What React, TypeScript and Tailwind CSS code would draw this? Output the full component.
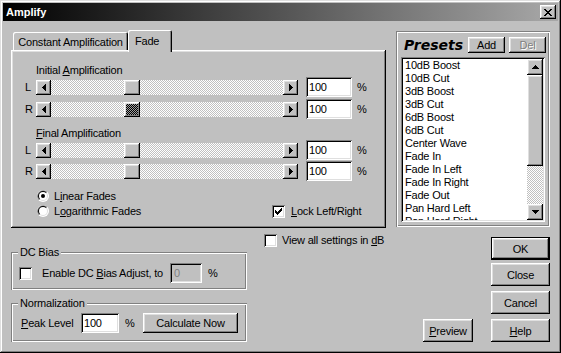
import React from "react";

const RAISED =
  "bg-[#c0c0c0] shadow-[inset_-1px_-1px_#000,inset_1px_1px_#fff,inset_-2px_-2px_#808080,inset_2px_2px_#dfdfdf]";
const SUNKEN =
  "shadow-[inset_1px_1px_#808080,inset_-1px_-1px_#fff,inset_2px_2px_#000,inset_-2px_-2px_#dfdfdf]";
const ETCHED =
  "shadow-[inset_1px_1px_#808080,inset_-1px_-1px_#fff,inset_2px_2px_#fff,inset_-2px_-2px_#808080]";
const DITHER =
  "bg-[image:repeating-conic-gradient(#c0c0c0_0_25%,#fff_0_50%)] bg-[length:2px_2px]";

function Arrow({ dir }: { dir: "left" | "right" | "up" | "down" }) {
  if (dir === "left")
    return (
      <svg width="4" height="7" viewBox="0 0 4 7" shapeRendering="crispEdges">
        <path d="M3 0h1v7h-1zM2 1h1v5h-1zM1 2h1v3h-1zM0 3h1v1h-1z" fill="#000" />
      </svg>
    );
  if (dir === "right")
    return (
      <svg width="4" height="7" viewBox="0 0 4 7" shapeRendering="crispEdges">
        <path d="M0 0h1v7h-1zM1 1h1v5h-1zM2 2h1v3h-1zM3 3h1v1h-1z" fill="#000" />
      </svg>
    );
  if (dir === "up")
    return (
      <svg width="7" height="4" viewBox="0 0 7 4" shapeRendering="crispEdges">
        <path d="M3 0h1v1h-1zM2 1h3v1h-3zM1 2h5v1h-5zM0 3h7v1h-7z" fill="#000" />
      </svg>
    );
  return (
    <svg width="7" height="4" viewBox="0 0 7 4" shapeRendering="crispEdges">
      <path d="M0 0h7v1h-7zM1 1h5v1h-5zM2 2h3v1h-3zM3 3h1v1h-1z" fill="#000" />
    </svg>
  );
}

function ArrowBtn({ dir }: { dir: "left" | "right" }) {
  return (
    <div className={`${RAISED} w-[15px] h-[15px] flex items-center justify-center shrink-0`}>
      <Arrow dir={dir} />
    </div>
  );
}

function Slider({ dark }: { dark?: boolean }) {
  return (
    <div className="flex h-[15px] w-[262px]">
      <ArrowBtn dir="left" />
      <div className={`flex-1 flex ${DITHER}`}>
        <div className="w-[73px] shrink-0" />
        {dark ? (
          <div className="w-[16px] h-[15px] bg-[image:repeating-conic-gradient(#000_0_25%,#a0a0a0_0_50%)] bg-[length:2px_2px] shadow-[inset_-1px_-1px_#000,inset_1px_1px_#fff,inset_-2px_-2px_#808080,inset_2px_2px_#dfdfdf]" />
        ) : (
          <div className={`${RAISED} w-[16px] h-[15px]`} />
        )}
      </div>
      <ArrowBtn dir="right" />
    </div>
  );
}

function SliderRow({ ch, dark, className }: { ch: string; dark?: boolean; className?: string }) {
  return (
    <div className={`flex items-center h-[20px] ${className ?? ""}`}>
      <span className="w-[11px]">{ch}</span>
      <Slider dark={dark} />
      <div className={`ml-[8px] w-[46px] h-[20px] bg-white ${SUNKEN} pl-[3px] flex items-center`}>100</div>
      <span className="ml-[5px]">%</span>
    </div>
  );
}

function Check({ checked }: { checked?: boolean }) {
  return (
    <div className={`w-[13px] h-[13px] bg-white ${SUNKEN} flex items-center justify-center shrink-0`}>
      {checked && (
        <svg width="7" height="7" viewBox="0 0 7 7" shapeRendering="crispEdges">
          <path
            d="M6 0h1v3h-1zM5 1h1v3h-1zM4 2h1v3h-1zM3 3h1v3h-1zM2 4h1v3h-1zM1 3h1v3h-1zM0 2h1v3h-1z"
            fill="#000"
          />
        </svg>
      )}
    </div>
  );
}

function Radio({ checked }: { checked?: boolean }) {
  return (
    <svg width="12" height="12" viewBox="0 0 12 12" className="shrink-0">
      <circle cx="6" cy="6" r="6" fill="#fff" />
      <path d="M1.76 10.24 A6 6 0 0 1 10.24 1.76 Z" fill="#808080" />
      <circle cx="6" cy="6" r="5" fill="#dfdfdf" />
      <path d="M2.46 9.54 A5 5 0 0 1 9.54 2.46 Z" fill="#000" />
      <circle cx="6" cy="6" r="4" fill="#fff" />
      {checked && <circle cx="6" cy="6" r="2" fill="#000" />}
    </svg>
  );
}

function Btn({
  children,
  className,
  def,
}: {
  children: React.ReactNode;
  className?: string;
  def?: boolean;
}) {
  return (
    <div
      className={`${RAISED} ${def ? "border border-black" : ""} flex items-center justify-center ${className ?? ""}`}
    >
      {children}
    </div>
  );
}

function Group({
  label,
  className,
  children,
}: {
  label: string;
  className?: string;
  children: React.ReactNode;
}) {
  return (
    <div className={`relative ${ETCHED} ${className ?? ""}`}>
      <span className="absolute left-[7px] top-[-7px] px-[2px] bg-[#c0c0c0] leading-[14px]">{label}</span>
      {children}
    </div>
  );
}

const presets = [
  "10dB Boost",
  "10dB Cut",
  "3dB Boost",
  "3dB Cut",
  "6dB Boost",
  "6dB Cut",
  "Center Wave",
  "Fade In",
  "Fade In Left",
  "Fade In Right",
  "Fade Out",
  "Pan Hard Left",
  "Pan Hard Right",
];

export default function App() {
  return (
    <div className="w-[561px] h-[353px] overflow-hidden bg-[#c0c0c0] p-[3px] shadow-[inset_-1px_-1px_#000,inset_1px_1px_#dfdfdf,inset_-2px_-2px_#808080,inset_2px_2px_#fff] font-['Liberation_Sans',Arial,sans-serif] text-[11px] leading-[14px] text-black tracking-[-0.2px]">
      {/* Title bar */}
      <div className="h-[18px] flex items-center justify-between pl-[3px] pr-[2px] bg-[linear-gradient(to_right,#000,#a8a8a8)]">
        <span className="text-white font-bold tracking-normal">Amplify</span>
        <div className={`${RAISED} w-[16px] h-[14px] flex items-center justify-center`}>
          <svg width="8" height="7" viewBox="0 0 8 7" shapeRendering="crispEdges">
            <path
              d="M0 0h2v1h-2zM6 0h2v1h-2zM1 1h2v1h-2zM5 1h2v1h-2zM2 2h4v1h-4zM3 3h2v1h-2zM2 4h4v1h-4zM1 5h2v1h-2zM5 5h2v1h-2zM0 6h2v1h-2zM6 6h2v1h-2z"
              fill="#000"
            />
          </svg>
        </div>
      </div>

      <div className="px-[8px]">
        {/* Top row */}
        <div className="flex gap-[10px] mt-[9px]">
          {/* Tab area */}
          <div className="w-[375px] flex flex-col">
            <div className="h-[20px] flex items-end pl-[2px]">
              <div className="w-[115px] h-[18px] pt-[3px] flex justify-center rounded-t-[2px] shadow-[inset_1px_1px_#fff,inset_-1px_0_#000,inset_-2px_0_#808080]">
                Constant Amplification
              </div>
              <div className="relative z-10 w-[44px] h-[22px] -mb-[2px] pt-[4px] pl-[7px] bg-[#c0c0c0] rounded-t-[2px] shadow-[inset_1px_1px_#fff,inset_-1px_0_#000,inset_-2px_0_#808080]">
                Fade
              </div>
            </div>
            <div className={`${RAISED} h-[178px] pl-[14px] pt-[13px] flex flex-col`}>
              <div className="pl-[11px] h-[14px]">
                Initial <u>A</u>mplification
              </div>
              <SliderRow ch="L" />
              <SliderRow ch="R" dark className="mt-[2px]" />
              <div className="pl-[11px] h-[14px] mt-[7px]">
                <u>F</u>inal Amplification
              </div>
              <SliderRow ch="L" />
              <SliderRow ch="R" className="mt-[1px]" />
              <div className="flex items-end mt-[8px]">
                <div className="ml-[12px] w-[235px] flex flex-col gap-[1px]">
                  <div className="flex items-center h-[14px] gap-[5px]">
                    <Radio checked />
                    <span>
                      L<u>i</u>near Fades
                    </span>
                  </div>
                  <div className="flex items-center h-[14px] gap-[5px]">
                    <Radio />
                    <span>
                      L<u>o</u>garithmic Fades
                    </span>
                  </div>
                </div>
                <div className="flex items-center h-[14px] gap-[6px]">
                  <Check checked />
                  <span>
                    <u>L</u>ock Left/Right
                  </span>
                </div>
              </div>
            </div>
          </div>

          {/* Presets */}
          <div className={`${ETCHED} w-[154px] h-[196px] mt-[1px] flex flex-col px-[5px] pt-[6px]`}>
            <div className="h-[16px] flex items-center">
              <span className="flex-1 pl-[3px] font-['DejaVu_Sans',sans-serif] font-bold italic text-[14px] tracking-normal">
                Presets
              </span>
              <Btn className="w-[37px] h-[16px]">Add</Btn>
              <Btn className="w-[37px] h-[16px] ml-[4px] -mr-[1px] text-[#808080] [text-shadow:1px_1px_#fff]">Del</Btn>
            </div>
            <div className={`mt-[4px] h-[165px] w-[144px] bg-white ${SUNKEN} flex p-[2px]`}>
              <div className="flex-1 overflow-hidden pl-[2px] leading-[13px]">
                {presets.map((p) => (
                  <div key={p} className="h-[13px]">
                    {p}
                  </div>
                ))}
              </div>
              <div className="w-[16px] flex flex-col">
                <div className={`${RAISED} h-[16px] flex items-center justify-center`}>
                  <Arrow dir="up" />
                </div>
                <div className={`${RAISED} h-[91px]`} />
                <div className={`flex-1 ${DITHER}`} />
                <div className={`${RAISED} h-[16px] flex items-center justify-center`}>
                  <Arrow dir="down" />
                </div>
              </div>
            </div>
          </div>
        </div>

        {/* Bottom row */}
        <div className="flex h-[114px]">
          <div className="w-[236px] flex flex-col">
            <Group label="DC Bias" className="mt-[24px] h-[38px]">
              <div className="flex items-center h-[20px] mt-[11px] pl-[8px]">
                <Check />
                <span className="ml-[10px] w-[128px]">
                  Enable DC <u>B</u>ias Adjust, to
                </span>
                <div className={`w-[32px] h-[20px] ${SUNKEN} flex items-center pl-[4px] text-[#808080]`}>0</div>
                <span className="ml-[6px]">%</span>
              </div>
            </Group>
            <Group label="Normalization" className="mt-[13px] h-[39px]">
              <div className="flex items-center h-[20px] mt-[10px] pl-[10px]">
                <span className="w-[60px]">
                  <u>P</u>eak Level
                </span>
                <div className={`w-[38px] h-[20px] bg-white ${SUNKEN} flex items-center pl-[3px]`}>100</div>
                <span className="ml-[6px] w-[18px]">%</span>
                <Btn className="w-[95px] h-[20px]">Calculate Now</Btn>
              </div>
            </Group>
          </div>
          <div className="flex-1 flex flex-col justify-between">
            <div className="flex items-center h-[14px] mt-[5px] pl-[17px] gap-[5px]">
              <Check />
              <span>
                View all settings in <u>d</u>B
              </span>
            </div>
            <Btn className="self-end mr-[18px] w-[50px] h-[23px]">
              <span>
                <u>P</u>review
              </span>
            </Btn>
          </div>
          <div className="w-[59px] flex flex-col">
            <Btn def className="mt-[9px] h-[23px]">
              OK
            </Btn>
            <Btn className="mt-[3px] h-[23px]">Close</Btn>
            <Btn className="mt-[5px] h-[23px]">Cancel</Btn>
            <Btn className="mt-[5px] h-[23px]">
              <span>
                <u>H</u>elp
              </span>
            </Btn>
          </div>
        </div>
      </div>
    </div>
  );
}
